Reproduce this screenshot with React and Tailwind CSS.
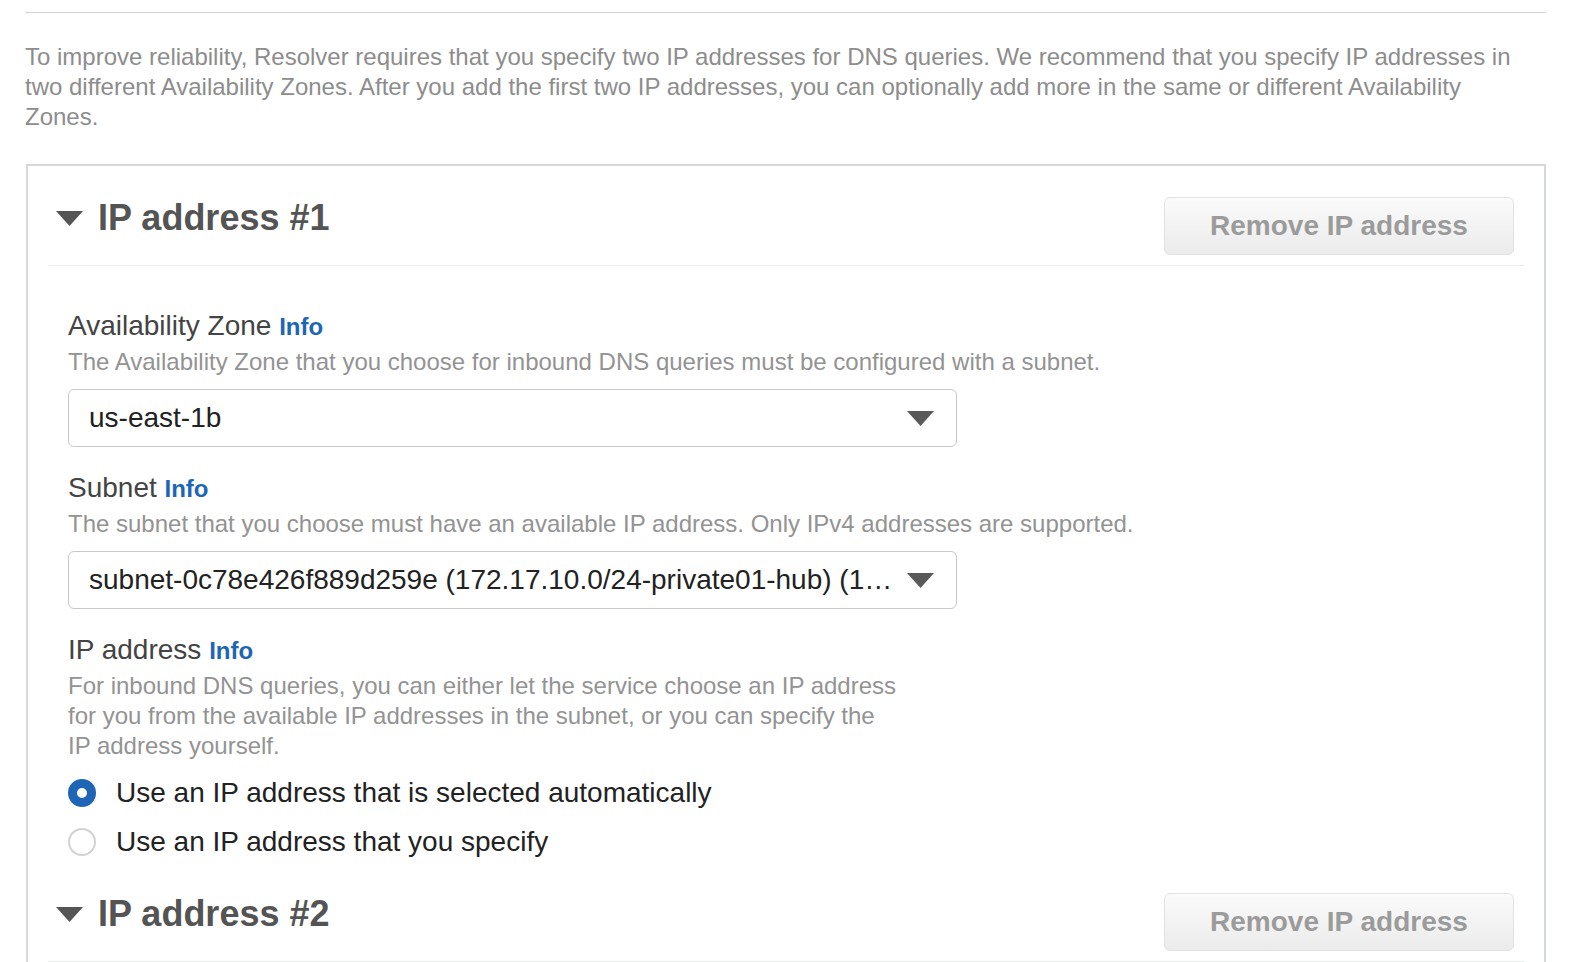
import { useState } from 'react';

function Caret({ className }) {
  return (
    <svg className={className} viewBox="0 0 27 15" fill="currentColor">
      <path d="M0 0 H27 L13.5 15 Z" />
    </svg>
  );
}

function SectionHeader({ title }) {
  return (
    <div className="mx-[20px] flex items-start justify-between border-b border-[#eaeded] pt-[31px] pb-[10px] pl-[8px] pr-[10px]">
      <div className="flex h-[42px] items-center gap-[15px]">
        <Caret className="h-[15px] w-[27px] text-[#555]" />
        <h2 className="text-[36px] font-bold leading-[42px] text-[#545454]">{title}</h2>
      </div>
      <button className="h-[58px] w-[350px] rounded-[6px] border border-[#e2e2e2] bg-gradient-to-b from-[#fbfbfb] to-[#ebebeb] text-[28px] font-bold text-[#9b9b9b]">
        Remove IP address
      </button>
    </div>
  );
}

function FieldLabel({ children }) {
  return (
    <div className="text-[28px] leading-[34px] text-[#444]">
      {children} <span className="text-[24px] font-bold text-[#1d66b6]">Info</span>
    </div>
  );
}

function Select({ value }) {
  return (
    <div className="mt-[12px] flex h-[58px] w-[889px] items-center rounded-[6px] border-[1.5px] border-[#c9c9c9] pl-[20px] pr-[22px]">
      <span className="flex-1 truncate text-[28px] text-[#222]">{value}</span>
      <Caret className="ml-[8px] h-[15px] w-[27px] shrink-0 text-[#595959]" />
    </div>
  );
}

function Radio({ checked, label, onClick }) {
  return (
    <div className="flex h-[34px] cursor-pointer items-center gap-[20px]" onClick={onClick}>
      {checked ? (
        <span className="h-[28px] w-[28px] rounded-full border-[9px] border-[#1e66b5] bg-white" />
      ) : (
        <span className="h-[28px] w-[28px] rounded-full border-2 border-[#d2d2d2] bg-white" />
      )}
      <span className="text-[28px] text-[#222]">{label}</span>
    </div>
  );
}

export default function App() {
  const [mode, setMode] = useState('auto');

  return (
    <div className="min-h-screen overflow-hidden bg-white pl-[25px] pr-[28px] pt-[12px] font-['Liberation_Sans',Arial,sans-serif]">
      <div className="h-px bg-[#d2d2d2]" />
      <p className="mt-[29px] max-w-[1500px] text-[24px] leading-[30px] text-[#8d8d8d]">
        To improve reliability, Resolver requires that you specify two IP addresses for DNS queries. We recommend that you specify IP addresses in two different Availability Zones. After you add the first two IP addresses, you can optionally add more in the same or different Availability Zones.
      </p>

      <div className="ml-[1px] mt-[32px] border-2 border-[#d5d9d9]">
        <SectionHeader title="IP address #1" />
        <div className="pl-[40px] pt-[43px] pb-[3px]">
          <FieldLabel>Availability Zone</FieldLabel>
          <div className="mt-[3px] text-[24px] leading-[30px] text-[#939393]">
            The Availability Zone that you choose for inbound DNS queries must be configured with a subnet.
          </div>
          <Select value="us-east-1b" />

          <div className="mt-[24px]">
            <FieldLabel>Subnet</FieldLabel>
          </div>
          <div className="mt-[3px] text-[24px] leading-[30px] text-[#939393]">
            The subnet that you choose must have an available IP address. Only IPv4 addresses are supported.
          </div>
          <Select value="subnet-0c78e426f889d259e (172.17.10.0/24-private01-hub) (172.17.10.0/24)" />

          <div className="mt-[24px]">
            <FieldLabel>IP address</FieldLabel>
          </div>
          <div className="mt-[3px] w-[834px] text-[24px] leading-[30px] text-[#939393]">
            For inbound DNS queries, you can either let the service choose an IP address for you from the available IP addresses in the subnet, or you can specify the IP address yourself.
          </div>
          <div className="mt-[15px] flex flex-col gap-[15px]">
            <Radio checked={mode === 'auto'} label="Use an IP address that is selected automatically" onClick={() => setMode('auto')} />
            <Radio checked={mode === 'manual'} label="Use an IP address that you specify" onClick={() => setMode('manual')} />
          </div>
        </div>
        <SectionHeader title="IP address #2" />
        <div className="h-[200px]" />
      </div>
    </div>
  );
}
